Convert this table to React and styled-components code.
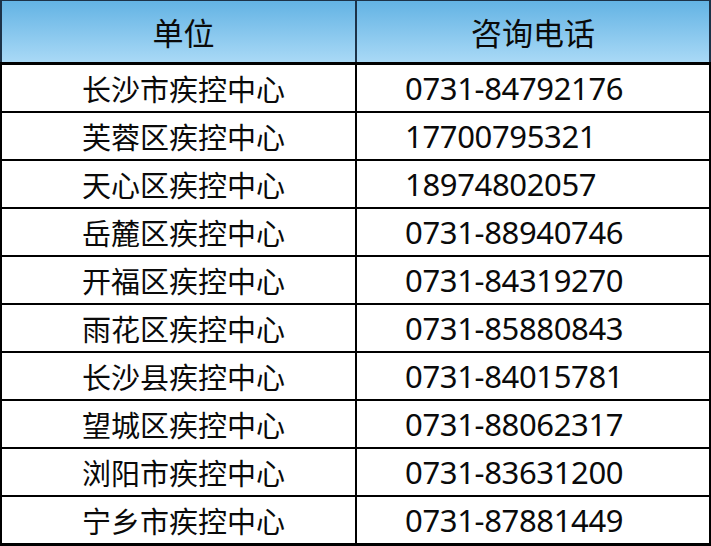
import React from "react";
import styled, { createGlobalStyle } from "styled-components";

const Global = createGlobalStyle`
  html, body { margin: 0; padding: 0; background: #fff; }
  body { font-family: "Noto Sans CJK SC", "Noto Sans", sans-serif; }
`;

const Table = styled.div`
  width: 711px;
  height: 546px;
  box-sizing: border-box;
  display: flex;
  flex-direction: column;
  gap: 2px;
  background: #000;
  padding-bottom: 3px;
`;

const Row = styled.div`
  display: grid;
  grid-template-columns: 353px 352px;
  column-gap: 2px;
  padding: ${(p) => (p.$head ? "1px 2px 3px" : "0 2px")};
  margin-bottom: ${(p) => (p.$head ? "-2px" : "0")};
  background: ${(p) => (p.$head ? "linear-gradient(#1c3248 0, #1c3248 62px, #000 62px)" : "#000")};
`;

const Cell = styled.div`
  height: ${(p) => (p.$head ? "61px" : "46px")};
  display: flex;
  align-items: center;
  box-sizing: border-box;
  justify-content: ${(p) => (p.$left ? "flex-start" : "center")};
  padding-left: ${(p) => p.$pl || 0}px;
  background: ${(p) => (p.$head ? "linear-gradient(#63b3e4, #a9d9f6)" : "#fff")};
  color: #0a0a0a;
  font-size: ${(p) => (p.$head ? "31px" : p.$num ? "31px" : "29px")};
  letter-spacing: ${(p) => (p.$num ? "-0.35px" : "0")};
  font-family: ${(p) =>
    p.$num ? '"Noto Sans", "Noto Sans CJK SC", sans-serif' : '"Noto Sans CJK SC", sans-serif'};
  white-space: nowrap;
  line-height: 1;
`;

const data = [
  ["长沙市疾控中心", "0731-84792176"],
  ["芙蓉区疾控中心", "17700795321"],
  ["天心区疾控中心", "18974802057"],
  ["岳麓区疾控中心", "0731-88940746"],
  ["开福区疾控中心", "0731-84319270"],
  ["雨花区疾控中心", "0731-85880843"],
  ["长沙县疾控中心", "0731-84015781"],
  ["望城区疾控中心", "0731-88062317"],
  ["浏阳市疾控中心", "0731-83631200"],
  ["宁乡市疾控中心", "0731-87881449"],
];

export default function App() {
  return (
    <>
      <Global />
      <Table>
        <Row $head>
          <Cell $head $pl={10}>单位</Cell>
          <Cell $head>咨询电话</Cell>
        </Row>
        {data.map(([name, tel]) => (
          <Row key={name}>
            <Cell $pl={10}>{name}</Cell>
            <Cell $left $num $pl={48}>{tel}</Cell>
          </Row>
        ))}
      </Table>
    </>
  );
}
